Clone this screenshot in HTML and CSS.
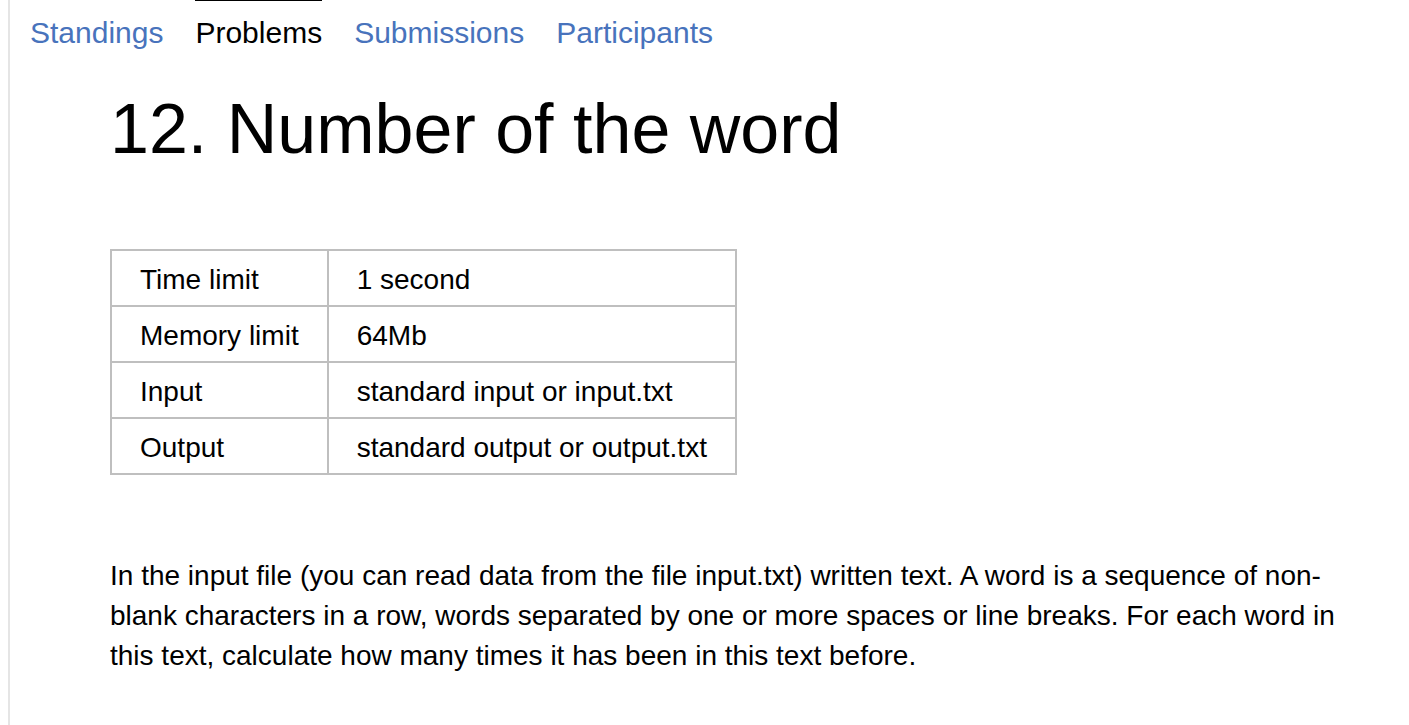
FILE: index.html
```html
<!DOCTYPE html>
<html lang="en">
<head>
<meta charset="utf-8">
<title>12. Number of the word</title>
<link rel="stylesheet" href="styles.css">
</head>
<body>
<div class="page">
  <nav class="tabs">
    <a class="tab" href="#standings">Standings</a>
    <a class="tab tab-active" href="#problems" aria-current="page">Problems</a>
    <a class="tab" href="#submissions">Submissions</a>
    <a class="tab" href="#participants">Participants</a>
  </nav>
  <main class="problem">
    <h1 class="title">12. Number of the word</h1>
    <table class="limits">
      <tbody>
        <tr><td>Time limit</td><td>1 second</td></tr>
        <tr><td>Memory limit</td><td>64Mb</td></tr>
        <tr><td>Input</td><td>standard input or input.txt</td></tr>
        <tr><td>Output</td><td>standard output or output.txt</td></tr>
      </tbody>
    </table>
    <p class="statement">In the input file (you can read data from the file input.txt) written text. A word is a sequence of non-blank characters in a row, words separated by one or more spaces or line breaks. For each word in this text, calculate how many times it has been in this text before.</p>
  </main>
</div>
</body>
</html>
```
FILE: styles.css
```css
* {
  box-sizing: border-box;
}

body {
  margin: 0;
  background: #fff;
  color: #000;
  font-family: "Liberation Sans", Arial, sans-serif;
}

.page {
  min-height: 100vh;
  margin-left: 8px;
  border-left: 2px solid #e5e5e5;
}

.tabs {
  display: flex;
  gap: 32px;
  padding-left: 20px;
}

.tab {
  padding-top: 16px;
  border-top: 1px solid transparent;
  color: #4873bc;
  font-size: 30px;
  line-height: 32px;
  text-decoration: none;
}

.tab-active {
  border-top-color: #000;
  color: #000;
}

.problem {
  padding: 40px 60px 0 100px;
}

.title {
  margin: 0 0 80px;
  font-size: 70px;
  font-weight: 400;
  line-height: 80px;
}

.limits {
  margin-bottom: 81px;
  border-collapse: collapse;
  font-size: 28px;
  line-height: 40px;
}

.limits td {
  padding: 9px 28px 5px;
  border: 2px solid #bfbfbf;
}

.statement {
  margin: 0;
  font-size: 28px;
  line-height: 40px;
}
```
